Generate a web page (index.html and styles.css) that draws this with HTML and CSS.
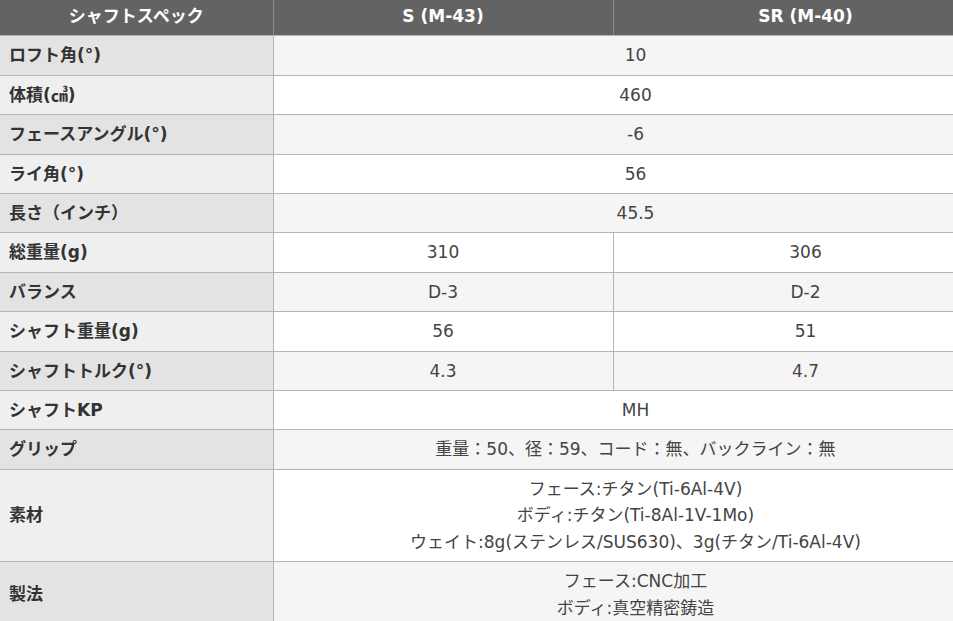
FILE: index.html
```html
<!DOCTYPE html>
<html lang="ja">
<head>
<meta charset="utf-8">
<title>シャフトスペック</title>
<link rel="stylesheet" href="styles.css">
</head>
<body>
<div class="wrap">
<table class="spec">
  <colgroup>
    <col class="c-label">
    <col class="c-s">
    <col class="c-sr">
  </colgroup>
  <thead>
    <tr>
      <th>シャフトスペック</th>
      <th>S (M-43)</th>
      <th>SR (M-40)</th>
    </tr>
  </thead>
  <tbody>
    <tr class="odd"><th>ロフト角(°)</th><td colspan="2">10</td></tr>
    <tr class="even"><th>体積(㎤)</th><td colspan="2">460</td></tr>
    <tr class="odd"><th>フェースアングル(°)</th><td colspan="2">-6</td></tr>
    <tr class="even"><th>ライ角(°)</th><td colspan="2">56</td></tr>
    <tr class="odd"><th>長さ（インチ）</th><td colspan="2">45.5</td></tr>
    <tr class="even"><th>総重量(g)</th><td>310</td><td>306</td></tr>
    <tr class="odd"><th>バランス</th><td>D-3</td><td>D-2</td></tr>
    <tr class="even"><th>シャフト重量(g)</th><td>56</td><td>51</td></tr>
    <tr class="odd"><th>シャフトトルク(°)</th><td>4.3</td><td>4.7</td></tr>
    <tr class="even"><th>シャフトKP</th><td colspan="2">MH</td></tr>
    <tr class="odd"><th>グリップ</th><td colspan="2">重量：50、径：59、コード：無、バックライン：無</td></tr>
    <tr class="even"><th>素材</th><td colspan="2">フェース:チタン(Ti-6Al-4V)<br>ボディ:チタン(Ti-8Al-1V-1Mo)<br>ウェイト:8g(ステンレス/SUS630)、3g(チタン/Ti-6Al-4V)</td></tr>
    <tr class="odd"><th>製法</th><td colspan="2">フェース:CNC加工<br>ボディ:真空精密鋳造</td></tr>
  </tbody>
</table>
</div>
</body>
</html>
```
FILE: styles.css
```css
html, body {
  margin: 0;
  padding: 0;
  background: #ffffff;
}

body {
  font-family: "DejaVu Sans", "Noto Sans CJK JP", sans-serif;
  font-size: 17px;
  color: #3c3c3c;
}

.wrap {
  width: 953px;
  overflow: hidden;
}

.spec {
  width: 998px;
  border-collapse: collapse;
  table-layout: fixed;
}

.c-label { width: 273px; }
.c-s { width: 340px; }
.c-sr { width: 385px; }

.spec th,
.spec td {
  border: 1px solid #b5b5b5;
  line-height: 26.4px;
  padding: 6px 10px;
  vertical-align: middle;
}

.spec thead th {
  background: #636363;
  color: #ffffff;
  font-weight: bold;
  text-align: center;
  padding: 3px 10px 6px;
  border-top: none;
  border-color: #8a8a8a;
  border-bottom-color: #b5b5b5;
}

.spec thead th:first-child { border-left: none; }

.spec tbody th {
  text-align: left;
  font-weight: bold;
  color: #333333;
  padding-left: 9px;
  border-left: none;
}

.spec tbody td {
  text-align: center;
  font-weight: normal;
  color: #444444;
}

.odd th { background: #e3e3e3; }
.odd td { background: #f5f5f5; }
.even th { background: #efefef; }
.even td { background: #ffffff; }
```
